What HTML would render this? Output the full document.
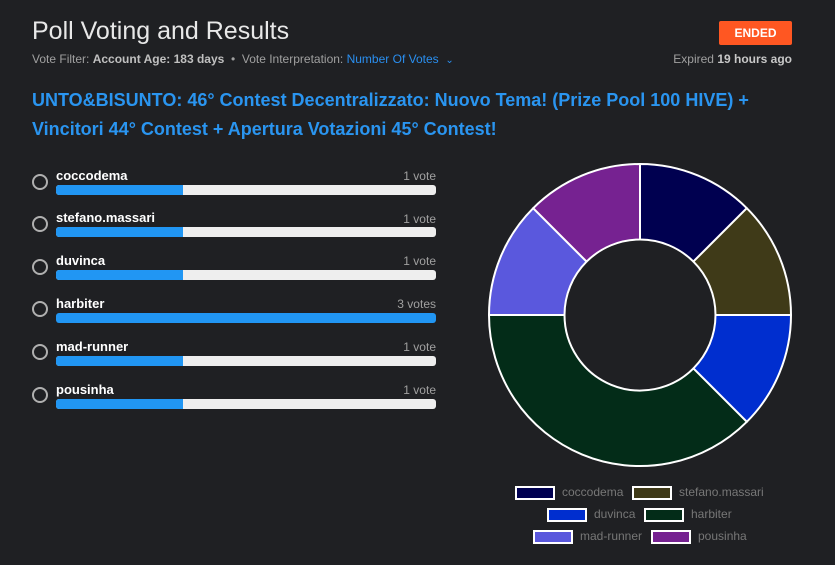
<!DOCTYPE html>
<html><head><meta charset="utf-8"><style>
body{margin:0;width:835px;height:565px;background:#1f2023;font-family:"Liberation Sans",sans-serif;overflow:hidden;position:relative}
.a{position:absolute;white-space:nowrap}
h1{position:absolute;left:32px;top:17px;margin:0;font-size:25px;font-weight:normal;color:#e8e8e8}
.sub{left:32px;top:52px;font-size:12px;color:#a0a0a0}
.t{left:32px;font-size:18px;font-weight:bold;color:#2a95f0}
.btn{left:719px;top:21px;width:73px;height:24px;background:#ff5722;color:#fff;font-size:12px;font-weight:bold;text-align:center;line-height:24px;border-radius:2px}
.row .c{position:absolute;left:32px;width:12px;height:12px;border:2px solid #b0b0b0;border-radius:50%}
.nm{font-size:13px;font-weight:bold;color:#fff;left:56px}
.vt{font-size:12px;color:#a0a0a0;right:399px}
.bar{position:absolute;left:56px;width:380px;height:10px;background:#eeeeee;border-radius:3px;overflow:hidden}
.bar i{display:block;height:100%;background:#2196f3;width:127px}
.lg{font-size:12px;color:#777}
.sw{position:absolute;width:36px;height:10px;border:2px solid #fff}
</style></head><body>
<h1>Poll Voting and Results</h1>
<div class="a sub">Vote Filter: <b style="color:#c0c0c0">Account Age: 183 days</b> &nbsp;•&nbsp; Vote Interpretation: <span style="color:#2a8ff0">Number Of Votes &nbsp;<span style="font-size:10px">⌄</span></span></div>
<div class="a btn">ENDED</div>
<div class="a" style="right:43px;top:52px;font-size:12px;color:#a0a0a0">Expired <b style="color:#c8c8c8">19 hours ago</b></div>
<div class="a t" style="top:90px">UNTO&amp;BISUNTO: 46° Contest Decentralizzato: Nuovo Tema! (Prize Pool 100 HIVE) +</div>
<div class="a t" style="top:119px">Vincitori 44° Contest + Apertura Votazioni 45° Contest!</div>

<div class="row"><div class="c" style="top:174px"></div><div class="a nm" style="top:168px">coccodema</div><div class="a vt" style="top:169px">1 vote</div><div class="bar" style="top:185px"><i></i></div></div>
<div class="row"><div class="c" style="top:216px"></div><div class="a nm" style="top:210px">stefano.massari</div><div class="a vt" style="top:212px">1 vote</div><div class="bar" style="top:227px"><i></i></div></div>
<div class="row"><div class="c" style="top:259px"></div><div class="a nm" style="top:253px">duvinca</div><div class="a vt" style="top:254px">1 vote</div><div class="bar" style="top:270px"><i></i></div></div>
<div class="row"><div class="c" style="top:301px"></div><div class="a nm" style="top:296px">harbiter</div><div class="a vt" style="top:297px">3 votes</div><div class="bar" style="top:313px"><i style="width:380px"></i></div></div>
<div class="row"><div class="c" style="top:344px"></div><div class="a nm" style="top:339px">mad-runner</div><div class="a vt" style="top:340px">1 vote</div><div class="bar" style="top:356px"><i></i></div></div>
<div class="row"><div class="c" style="top:387px"></div><div class="a nm" style="top:382px">pousinha</div><div class="a vt" style="top:383px">1 vote</div><div class="bar" style="top:399px"><i></i></div></div>

<svg class="a" style="left:0;top:0" width="835" height="565">
<g stroke="#fff" stroke-width="2" stroke-linejoin="round">
<path fill="#000050" d="M640 164 A151 151 0 0 1 746.8 208.2 L693.4 261.6 A75.5 75.5 0 0 0 640 239.5Z"/>
<path fill="#3f3a18" d="M746.8 208.2 A151 151 0 0 1 791 315 L715.5 315 A75.5 75.5 0 0 0 693.4 261.6Z"/>
<path fill="#002ecf" d="M791 315 A151 151 0 0 1 746.8 421.8 L693.4 368.4 A75.5 75.5 0 0 0 715.5 315Z"/>
<path fill="#032c18" d="M746.8 421.8 A151 151 0 0 1 489 315 L564.5 315 A75.5 75.5 0 0 0 693.4 368.4Z"/>
<path fill="#5a58dd" d="M489 315 A151 151 0 0 1 533.2 208.2 L586.6 261.6 A75.5 75.5 0 0 0 564.5 315Z"/>
<path fill="#762291" d="M533.2 208.2 A151 151 0 0 1 640 164 L640 239.5 A75.5 75.5 0 0 0 586.6 261.6Z"/>
</g></svg>

<div class="sw" style="left:515px;top:486px;background:#000050"></div><div class="a lg" style="left:562px;top:485px">coccodema</div>
<div class="sw" style="left:632px;top:486px;background:#3f3a18"></div><div class="a lg" style="left:679px;top:485px">stefano.massari</div>
<div class="sw" style="left:547px;top:508px;background:#002ecf"></div><div class="a lg" style="left:594px;top:507px">duvinca</div>
<div class="sw" style="left:644px;top:508px;background:#032c18"></div><div class="a lg" style="left:691px;top:507px">harbiter</div>
<div class="sw" style="left:533px;top:530px;background:#5a58dd"></div><div class="a lg" style="left:580px;top:529px">mad-runner</div>
<div class="sw" style="left:651px;top:530px;background:#762291"></div><div class="a lg" style="left:698px;top:529px">pousinha</div>
</body></html>
